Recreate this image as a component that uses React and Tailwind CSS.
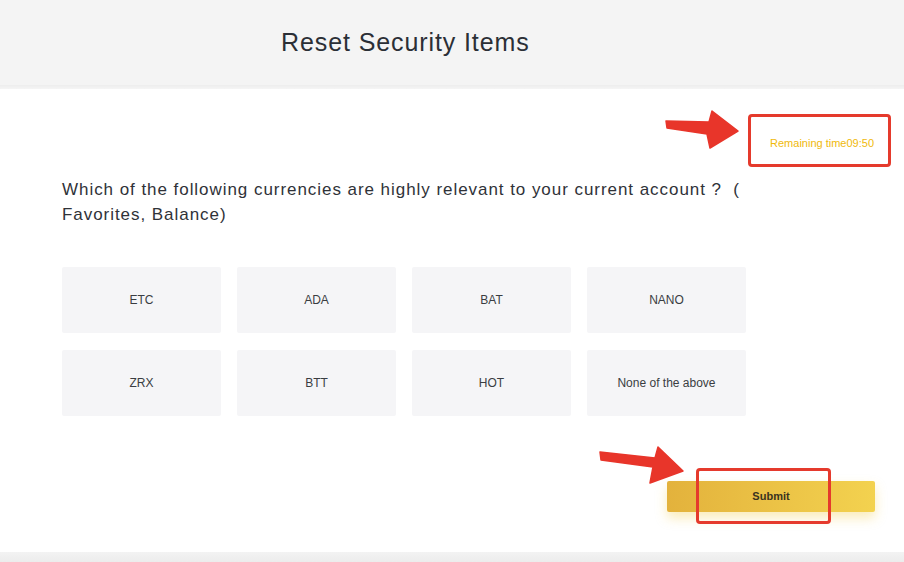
export default function App() {
  const items = ["ETC", "ADA", "BAT", "NANO", "ZRX", "BTT", "HOT", "None of the above"];
  return (
    <div
      className="relative w-[904px] h-[562px] overflow-hidden bg-white flex flex-col"
      style={{ fontFamily: '"Liberation Sans", Arial, sans-serif' }}
    >
      {/* header */}
      <div className="h-[85px] bg-[#f4f4f4] flex items-center pl-[281px] pt-[1px]">
        <h1 className="text-[25px] text-[#2b2f36] tracking-[0.9px]">Reset Security Items</h1>
      </div>
      <div className="h-[4px] bg-gradient-to-b from-[#ededed] to-[#f5f5f5]" />

      {/* timer */}
      <div className="flex justify-end pr-[30px] pt-[47px]">
        <span className="text-[11px] leading-[14px] text-[#f0b90b]">Remaining time09:50</span>
      </div>

      {/* question */}
      <p className="mt-[27px] pl-[62px] text-[17px] leading-[25px] tracking-[0.95px] text-[#2f3238]">
        Which of the following currencies are highly relevant to your current account ?&nbsp; (
        <br />
        Favorites, Balance)
      </p>

      {/* options */}
      <div className="mt-[40px] ml-[62px] w-[684px] grid grid-cols-4 gap-x-[16px] gap-y-[17px]">
        {items.map((t) => (
          <div
            key={t}
            className="h-[66px] bg-[#f5f5f7] rounded-[2px] flex items-center justify-center text-[12px] text-[#3a3d42]"
          >
            {t}
          </div>
        ))}
      </div>

      {/* submit */}
      <div className="mt-[65px] pl-[667px]">
        <button className="w-[208px] h-[31px] rounded-[2px] bg-gradient-to-r from-[#e3b23c] to-[#f3d24f] shadow-[0_6px_12px_rgba(240,200,60,0.35)] flex items-center justify-center text-[11px] font-bold text-[#3a3320]">
          Submit
        </button>
      </div>

      <div className="flex-1" />
      <div className="h-[10px] bg-gradient-to-b from-[#f3f3f3] to-[#ececec]" />

      {/* annotations */}
      <div className="absolute left-[748px] top-[114px] w-[143px] h-[53px] border-[3px] border-[#e53a2c] rounded-[4px]" />
      <div className="absolute left-[696px] top-[468px] w-[135px] h-[56px] border-[3px] border-[#e53a2c] rounded-[4px]" />
      <svg className="absolute left-0 top-0 pointer-events-none" width="904" height="562" viewBox="0 0 904 562">
        <polygon
          points="666,121 709,122 712,111 738,131 710,148 707,134 667,128"
          fill="#e8352a"
          stroke="#e8352a"
          strokeWidth="1.5"
          strokeLinejoin="round"
        />
        <polygon
          points="600,452 655,458 658,447 683,471 650,483 653,467 601,460"
          fill="#e8352a"
          stroke="#e8352a"
          strokeWidth="1.5"
          strokeLinejoin="round"
        />
      </svg>
    </div>
  );
}
